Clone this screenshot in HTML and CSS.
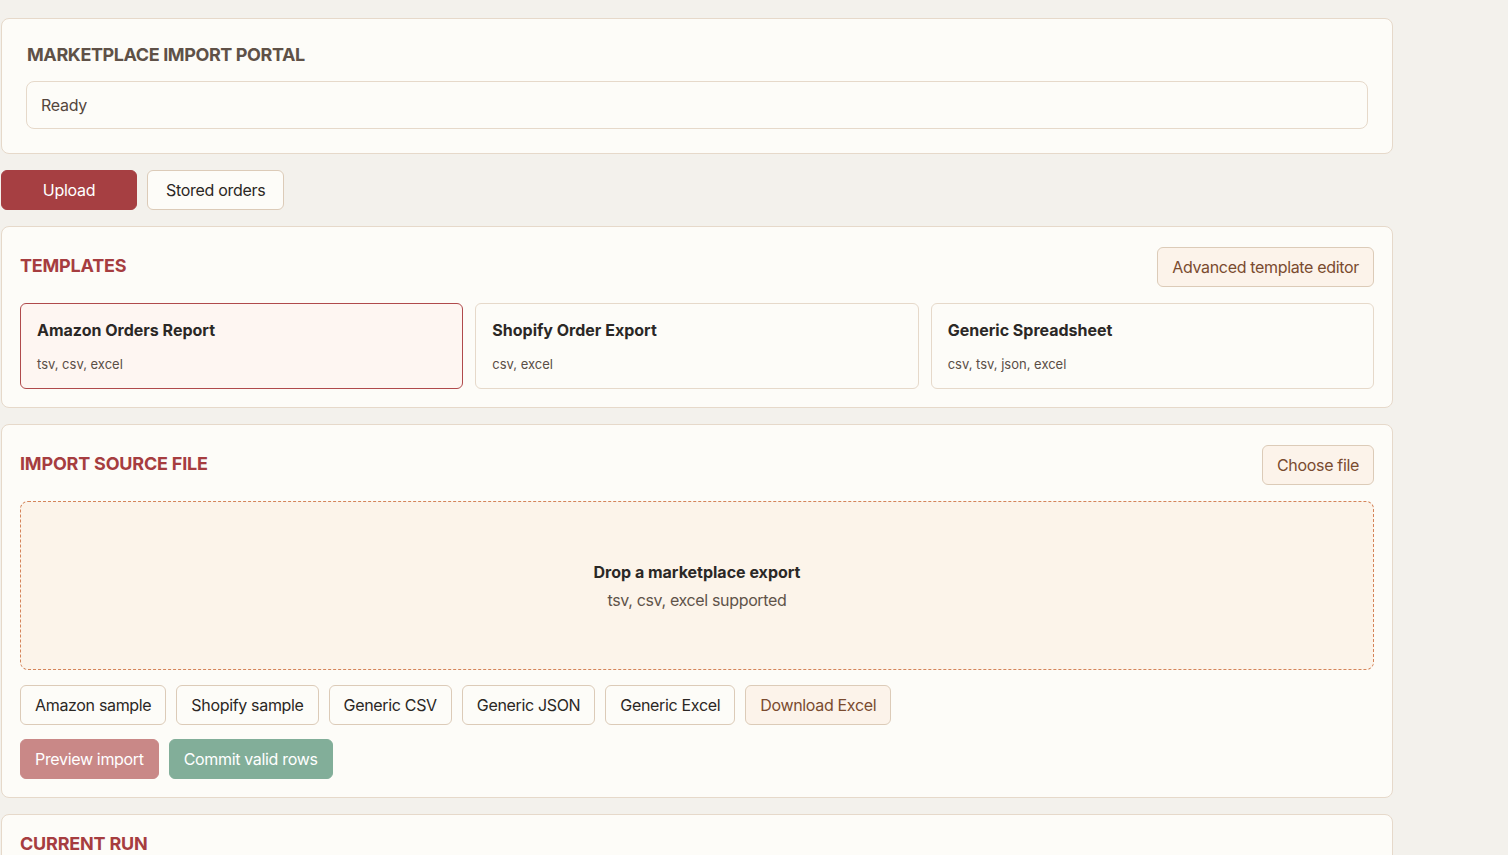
FILE: index.html
```html
<!DOCTYPE html>
<html lang="en">
<head>
<meta charset="utf-8">
<title>Marketplace Import Portal</title>
<link rel="stylesheet" href="styles.css">
</head>
<body>
<div class="page">
  <section class="panel header-panel">
    <h1 class="portal-title">MARKETPLACE IMPORT PORTAL</h1>
    <div class="status">Ready</div>
  </section>

  <nav class="tabs">
    <button class="tab tab-active">Upload</button>
    <button class="tab">Stored orders</button>
  </nav>

  <section class="panel">
    <div class="panel-head">
      <h2 class="section-title">TEMPLATES</h2>
      <button class="btn btn-soft">Advanced template editor</button>
    </div>
    <div class="cards">
      <div class="card card-selected">
        <div class="card-title">Amazon Orders Report</div>
        <div class="card-sub">tsv, csv, excel</div>
      </div>
      <div class="card">
        <div class="card-title">Shopify Order Export</div>
        <div class="card-sub">csv, excel</div>
      </div>
      <div class="card">
        <div class="card-title">Generic Spreadsheet</div>
        <div class="card-sub">csv, tsv, json, excel</div>
      </div>
    </div>
  </section>

  <section class="panel">
    <div class="panel-head">
      <h2 class="section-title">IMPORT SOURCE FILE</h2>
      <button class="btn btn-soft">Choose file</button>
    </div>
    <div class="dropzone">
      <div class="drop-title">Drop a marketplace export</div>
      <div class="drop-sub">tsv, csv, excel supported</div>
    </div>
    <div class="btn-row samples">
      <button class="btn">Amazon sample</button>
      <button class="btn">Shopify sample</button>
      <button class="btn">Generic CSV</button>
      <button class="btn">Generic JSON</button>
      <button class="btn">Generic Excel</button>
      <button class="btn btn-soft">Download Excel</button>
    </div>
    <div class="btn-row actions">
      <button class="btn btn-preview">Preview import</button>
      <button class="btn btn-commit">Commit valid rows</button>
    </div>
  </section>

  <section class="panel">
    <div class="panel-head plain">
      <h2 class="section-title">CURRENT RUN</h2>
    </div>
    <div class="run-body">No import previewed yet.</div>
  </section>
</div>
</body>
</html>
```

FILE: styles.css
```css
* { box-sizing: border-box; }

html, body {
  margin: 0;
  padding: 0;
  background: #f3f1ec;
  font-family: Inter, "Noto Sans", "Liberation Sans", sans-serif;
  color: #2b2724;
}

.page {
  width: 1392px;
  margin-left: 1px;
  padding: 18px 0 40px;
  display: flex;
  flex-direction: column;
  gap: 16px;
}

.panel {
  background: #fdfcf8;
  border: 1px solid #e6d9ca;
  border-radius: 8px;
  padding: 20px 18px 18px;
}

.header-panel {
  padding: 24px 24px 24px;
}

.portal-title {
  margin: 0 0 15px;
  font-size: 18px;
  line-height: 23px;
  font-weight: 700;
  color: #5f5147;
  letter-spacing: -0.4px;
  padding-left: 1px;
}

.status {
  height: 48px;
  border: 1px solid #e6d9ca;
  border-radius: 8px;
  background: #fdfcf8;
  padding: 0 14px;
  display: flex;
  align-items: center;
  font-size: 16px;
  letter-spacing: -0.3px;
  color: #54463d;
}

.tabs {
  display: flex;
  gap: 10px;
}

.tab {
  height: 40px;
  min-width: 136px;
  padding: 0 18px;
  border: 1px solid #dccbb8;
  border-radius: 6px;
  background: #fdfcf8;
  font-family: inherit;
  font-size: 16px;
  letter-spacing: -0.3px;
  color: #2b2724;
}

.tab-active {
  background: #a63f42;
  border-color: #a63f42;
  color: #fff;
}

.panel-head {
  display: flex;
  align-items: center;
  justify-content: space-between;
  height: 40px;
  margin-bottom: 16px;
}

.panel-head.plain { height: 20px; margin-bottom: 10px; }

.section-title {
  margin: 0;
  font-size: 18px;
  line-height: 22px;
  font-weight: 700;
  color: #a63d40;
  letter-spacing: -0.2px;
  position: relative;
  top: -1px;
}

.btn {
  height: 40px;
  padding: 0 14px;
  border: 1px solid #dccbb8;
  border-radius: 6px;
  background: #fdfcf8;
  font-family: inherit;
  font-size: 16px;
  letter-spacing: -0.33px;
  color: #2b2724;
  white-space: nowrap;
}

.btn-soft {
  background: #fcf3ea;
  color: #7a4b2f;
}

.cards {
  display: grid;
  grid-template-columns: repeat(3, 1fr);
  gap: 12px;
}

.card {
  height: 86px;
  border: 1px solid #e6d9ca;
  border-radius: 6px;
  background: #fdfcf8;
  padding: 16px 16px;
  display: flex;
  flex-direction: column;
  gap: 16px;
}

.card-selected {
  border-color: #b04a4c;
  background: #fef6f2;
}

.card-title {
  font-size: 16px;
  line-height: 20px;
  font-weight: 700;
  color: #2b2826;
}

.card-sub {
  font-size: 13px;
  line-height: 16px;
  color: #5a4e46;
}

.dropzone {
  height: 169px;
  border: 1px dashed #d4845a;
  border-radius: 8px;
  background: #fcf4ea;
  display: flex;
  flex-direction: column;
  align-items: center;
  justify-content: center;
  gap: 8px;
  margin-bottom: 15px;
}

.drop-title {
  font-size: 16px;
  line-height: 20px;
  font-weight: 700;
  color: #2b2826;
}

.drop-sub {
  font-size: 16px;
  line-height: 20px;
  letter-spacing: -0.35px;
  color: #5f5349;
}

.btn-row {
  display: flex;
  gap: 10px;
}

.samples { margin-bottom: 14px; }

.btn-preview {
  background: #c98887;
  border-color: #c98887;
  color: #fff;
}

.btn-commit {
  background: #82ae99;
  border-color: #82ae99;
  color: #fff;
}

.run-body {
  font-size: 14px;
  color: #5f5349;
  padding: 8px 0;
}
```
